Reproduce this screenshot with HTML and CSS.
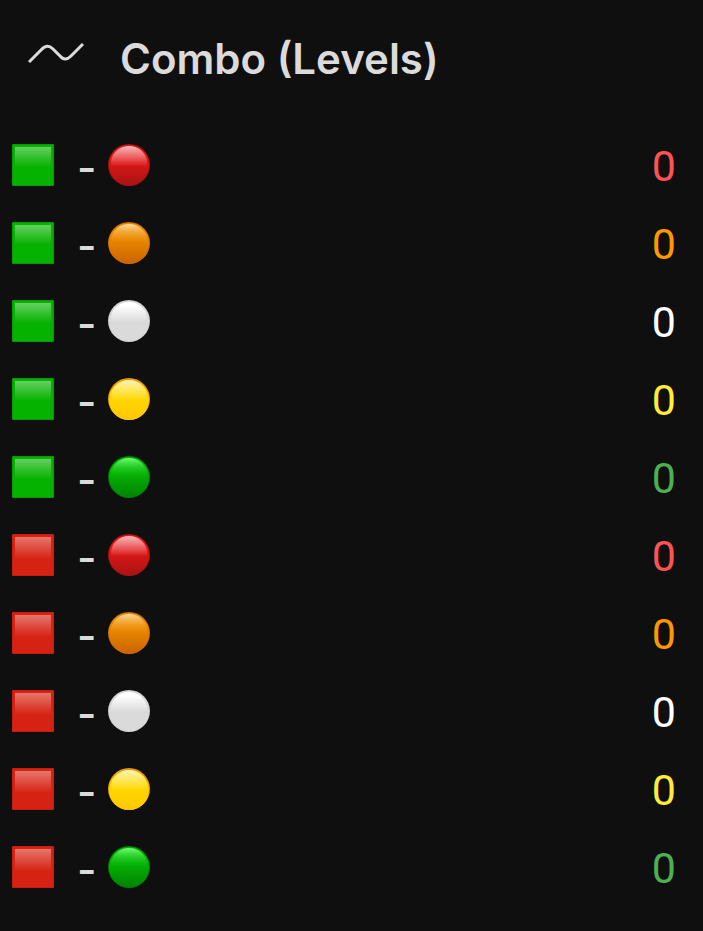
FILE: index.html
```
<!DOCTYPE html>
<html lang="en">
<head>
    <meta charset="UTF-8">
    <meta name="viewport" content="width=device-width, initial-scale=1.0">
    <title>Combo (Levels)</title>
    <link rel="stylesheet" href="styles.css">
</head>
<body>
    <!-- Shared shapes and gradients -->
    <svg class="sprite" aria-hidden="true">
        <defs>
            <linearGradient id="fillRed" x1="0" y1="0" x2="0" y2="1">
                <stop offset="0.35" stop-color="#e51616"/>
                <stop offset="1" stop-color="#a81414"/>
            </linearGradient>
            <linearGradient id="fillOrange" x1="0" y1="0" x2="0" y2="1">
                <stop offset="0.35" stop-color="#ec8a00"/>
                <stop offset="1" stop-color="#cc6400"/>
            </linearGradient>
            <linearGradient id="fillYellow" x1="0" y1="0" x2="0" y2="1">
                <stop offset="0.35" stop-color="#ffd900"/>
                <stop offset="1" stop-color="#ffc800"/>
            </linearGradient>
            <linearGradient id="fillGreen" x1="0" y1="0" x2="0" y2="1">
                <stop offset="0.35" stop-color="#06b606"/>
                <stop offset="1" stop-color="#008400"/>
            </linearGradient>
            <linearGradient id="squareGloss" x1="0" y1="0" x2="0" y2="1">
                <stop offset="0" stop-color="#fff" stop-opacity="0.38"/>
                <stop offset="1" stop-color="#fff" stop-opacity="0"/>
            </linearGradient>
            <linearGradient id="circleGloss" x1="0" y1="0" x2="0" y2="1">
                <stop offset="0" stop-color="#fff" stop-opacity="0.7"/>
                <stop offset="0.6" stop-color="#fff" stop-opacity="0"/>
            </linearGradient>
            <linearGradient id="orangeGloss" x1="0" y1="0" x2="0" y2="1">
                <stop offset="0" stop-color="#ffdc9c"/>
                <stop offset="0.6" stop-color="#ec8a00" stop-opacity="0"/>
            </linearGradient>
            <linearGradient id="whiteGloss" x1="0" y1="0" x2="0" y2="1">
                <stop offset="0.1" stop-color="#fff"/>
                <stop offset="0.6" stop-color="#fff" stop-opacity="0"/>
            </linearGradient>
            <linearGradient id="greenGloss" x1="0" y1="0" x2="0" y2="1">
                <stop offset="0" stop-color="#70ff70"/>
                <stop offset="0.6" stop-color="#06b606" stop-opacity="0"/>
            </linearGradient>
        </defs>
        <symbol id="square-green" viewBox="0 0 42 42">
            <rect width="42" height="42" rx="1" fill="#009b00"/>
            <rect x="1" y="1" width="40" height="40" fill="#06b200"/>
            <rect x="3" y="3" width="36" height="20" fill="url(#squareGloss)"/>
        </symbol>
        <symbol id="square-red" viewBox="0 0 42 42">
            <rect width="42" height="42" rx="1" fill="#c91c0c"/>
            <rect x="1" y="1" width="40" height="40" fill="#d62212"/>
            <rect x="3" y="3" width="36" height="22" fill="url(#squareGloss)"/>
        </symbol>
        <symbol id="circle-red" viewBox="0 0 42 42">
            <circle cx="21" cy="21" r="21" fill="#ae1010"/>
            <circle cx="21" cy="21" r="20" fill="url(#fillRed)"/>
            <ellipse cx="21" cy="19" rx="18" ry="17" fill="url(#circleGloss)"/>
        </symbol>
        <symbol id="circle-orange" viewBox="0 0 42 42">
            <circle cx="21" cy="21" r="21" fill="#cf7000"/>
            <circle cx="21" cy="21" r="20" fill="url(#fillOrange)"/>
            <ellipse cx="21" cy="19" rx="18" ry="17" fill="url(#orangeGloss)"/>
        </symbol>
        <symbol id="circle-white" viewBox="0 0 42 42">
            <circle cx="21" cy="21" r="21" fill="#cecece"/>
            <circle cx="21" cy="21" r="20" fill="#dadada"/>
            <ellipse cx="21" cy="19" rx="18" ry="17" fill="url(#whiteGloss)"/>
        </symbol>
        <symbol id="circle-yellow" viewBox="0 0 42 42">
            <circle cx="21" cy="21" r="21" fill="#ec9800"/>
            <circle cx="21" cy="22" r="20" fill="url(#fillYellow)"/>
            <ellipse cx="21" cy="19" rx="18" ry="17" fill="url(#circleGloss)"/>
        </symbol>
        <symbol id="circle-green" viewBox="0 0 42 42">
            <circle cx="21" cy="21" r="21" fill="#007e00"/>
            <circle cx="21" cy="21" r="20" fill="url(#fillGreen)"/>
            <ellipse cx="21" cy="19" rx="18" ry="17" fill="url(#greenGloss)"/>
        </symbol>
    </svg>

    <main class="panel">
        <header class="panel-header">
            <svg class="panel-icon" viewBox="0 0 56 20" aria-hidden="true">
                <path d="M1 19 L13 7 Q19 0 25 6 L32 13 Q37 19 43 13 L55 1"/>
            </svg>
            <h1>Combo (Levels)</h1>
        </header>

        <ul class="levels">
            <li class="level">
                <svg class="marker"><use href="#square-green"/></svg>
                <span class="dash">-</span>
                <svg class="marker"><use href="#circle-red"/></svg>
                <span class="value red">0</span>
            </li>
            <li class="level">
                <svg class="marker"><use href="#square-green"/></svg>
                <span class="dash">-</span>
                <svg class="marker"><use href="#circle-orange"/></svg>
                <span class="value orange">0</span>
            </li>
            <li class="level">
                <svg class="marker"><use href="#square-green"/></svg>
                <span class="dash">-</span>
                <svg class="marker"><use href="#circle-white"/></svg>
                <span class="value white">0</span>
            </li>
            <li class="level">
                <svg class="marker"><use href="#square-green"/></svg>
                <span class="dash">-</span>
                <svg class="marker"><use href="#circle-yellow"/></svg>
                <span class="value yellow">0</span>
            </li>
            <li class="level">
                <svg class="marker"><use href="#square-green"/></svg>
                <span class="dash">-</span>
                <svg class="marker"><use href="#circle-green"/></svg>
                <span class="value green">0</span>
            </li>
            <li class="level">
                <svg class="marker"><use href="#square-red"/></svg>
                <span class="dash">-</span>
                <svg class="marker"><use href="#circle-red"/></svg>
                <span class="value red">0</span>
            </li>
            <li class="level">
                <svg class="marker"><use href="#square-red"/></svg>
                <span class="dash">-</span>
                <svg class="marker"><use href="#circle-orange"/></svg>
                <span class="value orange">0</span>
            </li>
            <li class="level">
                <svg class="marker"><use href="#square-red"/></svg>
                <span class="dash">-</span>
                <svg class="marker"><use href="#circle-white"/></svg>
                <span class="value white">0</span>
            </li>
            <li class="level">
                <svg class="marker"><use href="#square-red"/></svg>
                <span class="dash">-</span>
                <svg class="marker"><use href="#circle-yellow"/></svg>
                <span class="value yellow">0</span>
            </li>
            <li class="level">
                <svg class="marker"><use href="#square-red"/></svg>
                <span class="dash">-</span>
                <svg class="marker"><use href="#circle-green"/></svg>
                <span class="value green">0</span>
            </li>
        </ul>
    </main>
</body>
</html>
```
FILE: styles.css
```
:root {
    --color-bg: #0f0f0f;
    --color-text: #dbdbdb;
    --color-red: #ff5252;
    --color-orange: #ff9800;
    --color-white: #ffffff;
    --color-yellow: #ffeb3b;
    --color-green: #4caf50;
}

* {
    margin: 0;
    padding: 0;
    box-sizing: border-box;
}

body {
    font-family: Inter, Roboto, sans-serif;
    background-color: var(--color-bg);
    color: var(--color-text);
}

/* display: none would switch the gradients off */
.sprite {
    display: block;
    width: 0;
    height: 0;
}

.panel-header {
    display: flex;
    align-items: center;
    gap: 36px;
    padding: 32px 28px 40px;
}

.panel-header h1 {
    font-size: 42px;
    font-weight: 600;
    line-height: 54px;
}

.panel-icon {
    width: 56px;
    height: 20px;
    margin-bottom: 12px;
    fill: none;
    stroke: var(--color-text);
    stroke-width: 3;
}

.levels {
    list-style: none;
}

.level {
    display: flex;
    align-items: center;
    height: 78px;
    padding: 0 27px 0 12px;
}

.marker {
    width: 42px;
    height: 42px;
}

.dash {
    width: 54px;
    padding-top: 4px;
    padding-left: 23px;
    font-size: 42px;
    font-weight: 500;
}

.value {
    margin-left: auto;
    padding-top: 2px;
    font-family: Roboto, sans-serif;
    font-size: 43px;
}

.red {
    color: var(--color-red);
}

.orange {
    color: var(--color-orange);
}

.white {
    color: var(--color-white);
}

.yellow {
    color: var(--color-yellow);
}

.green {
    color: var(--color-green);
}
```
